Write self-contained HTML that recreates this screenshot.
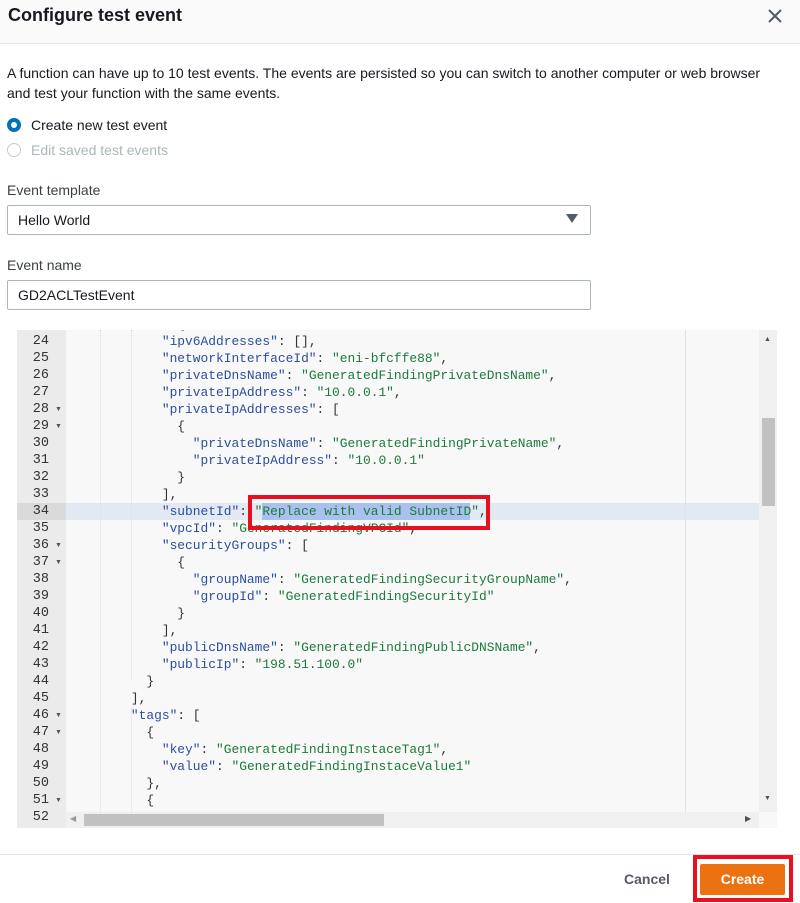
<!DOCTYPE html>
<html><head><meta charset="utf-8"><style>
*{margin:0;padding:0;box-sizing:border-box}
body{width:800px;height:903px;background:#fff;font-family:"Liberation Sans",sans-serif;position:relative;overflow:hidden;color:#16191f}
.a{position:absolute}
.hdr{left:0;top:0;width:800px;height:44px;background:#fafafa;border-bottom:1px solid #e1e4e8}
.t{font-size:14px}
.code{font-family:"Liberation Mono",monospace;font-size:12.9px;white-space:pre;line-height:17px}
.k{color:#2a4f9e}.s{color:#1d7a3a}.p{color:#333}
.ln{width:49px;text-align:right;padding-right:17px;color:#333;font-family:"Liberation Mono",monospace;font-size:13.5px;line-height:17px}
.fold{position:absolute;left:38px;font-size:7px;color:#555}
</style></head><body>
<div class="a hdr"></div>
<div class="a" style="left:8px;top:5px;font-size:18px;font-weight:bold;color:#16191f">Configure test event</div>
<svg class="a" style="left:766px;top:7px" width="18" height="18" viewBox="0 0 18 18"><path d="M3 3L15 15M15 3L3 15" stroke="#545b64" stroke-width="2"/></svg>
<div class="a t" style="left:7px;top:63px;line-height:20px;width:772px;color:#16191f">A function can have up to 10 test events. The events are persisted so you can switch to another computer or web browser and test your function with the same events.</div>
<div class="a" style="left:7px;top:118px;width:14px;height:14px;border-radius:50%;border:4px solid #0073bb;background:#fff"></div>
<div class="a t" style="left:31px;top:117px">Create new test event</div>
<div class="a" style="left:7px;top:143px;width:14px;height:14px;border-radius:50%;border:1.5px solid #c6cccf;background:#fff"></div>
<div class="a t" style="left:31px;top:142px;color:#aab7b8">Edit saved test events</div>
<div class="a t" style="left:7px;top:182px;color:#3b4146">Event template</div>
<div class="a" style="left:7px;top:205px;width:584px;height:30px;border:1px solid #aab7b8;border-radius:2px"></div>
<div class="a t" style="left:18px;top:212px">Hello World</div>
<svg class="a" style="left:566px;top:214px" width="12" height="10"><path d="M0 0H12L6 9Z" fill="#545b64"/></svg>
<div class="a t" style="left:7px;top:257px;color:#3b4146">Event name</div>
<div class="a" style="left:7px;top:280px;width:584px;height:30px;border:1px solid #aab7b8;border-radius:2px"></div>
<div class="a t" style="left:18px;top:287px">GD2ACLTestEvent</div>

<div class="a" style="left:17px;top:330px;width:760px;height:498px;background:#f8f8f8;overflow:hidden">
 <div class="a" style="left:0;top:0;width:49px;height:498px;background:#ebebeb"></div>
 <div class="a" style="left:0;top:173px;width:743px;height:17px;background:#e2e9f3"></div>
 <div class="a" style="left:0;top:173px;width:49px;height:17px;background:#dadada"></div>
 <div class="a" style="left:668px;top:0;width:1px;height:482px;background:#e3e3e3"></div>
 <div class="a" style="left:83px;top:0;width:0;height:482px;border-left:1px dotted #ddd"></div>
 <div class="a" style="left:114px;top:0;width:0;height:350px;border-left:1px dotted #ddd"></div>
 <div class="a" style="left:114px;top:378px;width:0;height:110px;border-left:1px dotted #ddd"></div>
 <div class="a" style="left:245px;top:173px;width:208px;height:17px;background:#a9c1ee"></div>
 <div class="a" style="left:742px;top:0;width:18px;height:482px;background:#f0f0f0"></div>
 <div class="a" style="left:745px;top:88px;width:13px;height:88px;background:#c1c1c1"></div>
 <div class="a" style="left:747px;top:6px;font-size:7px;color:#505050">▲</div>
 <div class="a" style="left:747px;top:465px;font-size:7px;color:#505050">▼</div>
 <div class="a" style="left:49px;top:482px;width:693px;height:16px;background:#f0f0f0"></div>
 <div class="a" style="left:67px;top:484px;width:300px;height:12px;background:#c1c1c1"></div>
 <div class="a" style="left:53px;top:484px;font-size:8px;color:#999">◀</div>
 <div class="a" style="left:728px;top:484px;font-size:8px;color:#505050">▶</div>
 <div class="a" style="left:0;top:3px">
<div class="ln" style="position:absolute;top:0">24</div><div class="ln" style="position:absolute;top:17px">25</div><div class="ln" style="position:absolute;top:34px">26</div><div class="ln" style="position:absolute;top:51px">27</div><div class="ln" style="position:absolute;top:68px">28</div><div class="ln" style="position:absolute;top:85px">29</div><div class="ln" style="position:absolute;top:102px">30</div><div class="ln" style="position:absolute;top:119px">31</div><div class="ln" style="position:absolute;top:136px">32</div><div class="ln" style="position:absolute;top:153px">33</div><div class="ln" style="position:absolute;top:170px">34</div><div class="ln" style="position:absolute;top:187px">35</div><div class="ln" style="position:absolute;top:204px">36</div><div class="ln" style="position:absolute;top:221px">37</div><div class="ln" style="position:absolute;top:238px">38</div><div class="ln" style="position:absolute;top:255px">39</div><div class="ln" style="position:absolute;top:272px">40</div><div class="ln" style="position:absolute;top:289px">41</div><div class="ln" style="position:absolute;top:306px">42</div><div class="ln" style="position:absolute;top:323px">43</div><div class="ln" style="position:absolute;top:340px">44</div><div class="ln" style="position:absolute;top:357px">45</div><div class="ln" style="position:absolute;top:374px">46</div><div class="ln" style="position:absolute;top:391px">47</div><div class="ln" style="position:absolute;top:408px">48</div><div class="ln" style="position:absolute;top:425px">49</div><div class="ln" style="position:absolute;top:442px">50</div><div class="ln" style="position:absolute;top:459px">51</div><div class="ln" style="position:absolute;top:476px">52</div>
<span class="fold" style="top:73px">▼</span><span class="fold" style="top:90px">▼</span><span class="fold" style="top:209px">▼</span><span class="fold" style="top:226px">▼</span><span class="fold" style="top:379px">▼</span><span class="fold" style="top:396px">▼</span><span class="fold" style="top:464px">▼</span>
<div class="code p a" style="left:52px;top:-17px">              {
            <span class="k">"ipv6Addresses"</span>: [],
            <span class="k">"networkInterfaceId"</span>: <span class="s">"eni-bfcffe88"</span>,
            <span class="k">"privateDnsName"</span>: <span class="s">"GeneratedFindingPrivateDnsName"</span>,
            <span class="k">"privateIpAddress"</span>: <span class="s">"10.0.0.1"</span>,
            <span class="k">"privateIpAddresses"</span>: [
              {
                <span class="k">"privateDnsName"</span>: <span class="s">"GeneratedFindingPrivateName"</span>,
                <span class="k">"privateIpAddress"</span>: <span class="s">"10.0.0.1"</span>
              }
            ],
            <span class="k">"subnetId"</span>: <span class="s">"Replace with valid SubnetID"</span>,
            <span class="k">"vpcId"</span>: <span class="s">"GeneratedFindingVPCId"</span>,
            <span class="k">"securityGroups"</span>: [
              {
                <span class="k">"groupName"</span>: <span class="s">"GeneratedFindingSecurityGroupName"</span>,
                <span class="k">"groupId"</span>: <span class="s">"GeneratedFindingSecurityId"</span>
              }
            ],
            <span class="k">"publicDnsName"</span>: <span class="s">"GeneratedFindingPublicDNSName"</span>,
            <span class="k">"publicIp"</span>: <span class="s">"198.51.100.0"</span>
          }
        ],
        <span class="k">"tags"</span>: [
          {
            <span class="k">"key"</span>: <span class="s">"GeneratedFindingInstaceTag1"</span>,
            <span class="k">"value"</span>: <span class="s">"GeneratedFindingInstaceValue1"</span>
          },
          {
</div>
 </div>
</div>
<div class="a" style="left:248px;top:495px;width:242px;height:35px;border:4px solid #e8101e"></div>

<div class="a" style="left:0;top:854px;width:800px;height:1px;background:#e1e4e8"></div>
<div class="a" style="left:624px;top:871px;font-size:14px;font-weight:bold;color:#545b64">Cancel</div>
<div class="a" style="left:693px;top:855px;width:100px;height:47px;border:4px solid #e8101e"></div>
<div class="a" style="left:700px;top:864px;width:85px;height:31px;background:#ec7211;border-radius:2px;color:#fff;font-weight:bold;font-size:14px;text-align:center;line-height:31px">Create</div>
</body></html>
